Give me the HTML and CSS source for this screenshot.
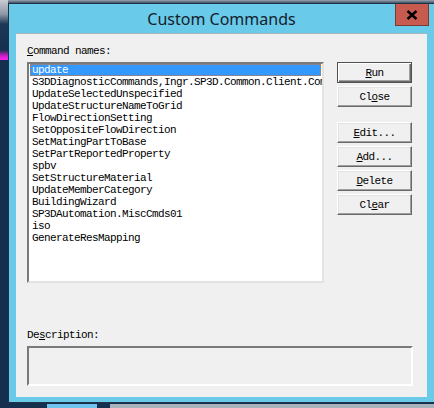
FILE: index.html
```html
<!DOCTYPE html>
<html lang="en">
<head>
  <meta charset="UTF-8">
  <title>Custom Commands</title>
  <link rel="stylesheet" href="styles.css">
</head>
<body>
  <div class="desktop">
    <span class="wallpaper-glow"></span>
    <div class="window">
      <div class="titlebar">
        <span class="title">Custom Commands</span>
        <button class="close-btn" aria-label="Close">
          <svg width="12" height="10" viewBox="0 0 12 10">
            <path d="M1.5 1 L10.5 9 M10.5 1 L1.5 9" stroke="#000" stroke-width="2.4" />
          </svg>
        </button>
      </div>

      <div class="client">
        <div class="label"><u>C</u>ommand names:</div>
        <div class="top-row">
          <ul class="listbox">
            <li class="selected">update</li>
            <li>S3DDiagnosticCommands,Ingr.SP3D.Common.Client.Com</li>
            <li>UpdateSelectedUnspecified</li>
            <li>UpdateStructureNameToGrid</li>
            <li>FlowDirectionSetting</li>
            <li>SetOppositeFlowDirection</li>
            <li>SetMatingPartToBase</li>
            <li>SetPartReportedProperty</li>
            <li>spbv</li>
            <li>SetStructureMaterial</li>
            <li>UpdateMemberCategory</li>
            <li>BuildingWizard</li>
            <li>SP3DAutomation.MiscCmds01</li>
            <li>iso</li>
            <li>GenerateResMapping</li>
          </ul>
          <div class="buttons">
            <button class="btn default"><u>R</u>un</button>
            <button class="btn">Cl<u>o</u>se</button>
            <button class="btn spaced"><u>E</u>dit...</button>
            <button class="btn"><u>A</u>dd...</button>
            <button class="btn"><u>D</u>elete</button>
            <button class="btn">Cl<u>e</u>ar</button>
          </div>
        </div>
        <div class="label desc-label">De<u>s</u>cription:</div>
        <div class="desc-box"></div>
      </div>
    </div>
    <div class="taskbar">
      <span class="task-active"></span>
      <span class="task-rest"></span>
    </div>
  </div>
</body>
</html>
```

FILE: styles.css
```css
html, body {
  margin: 0;
  padding: 0;
}
body {
  width: 434px;
  height: 408px;
  overflow: hidden;
  background: #15304f;
  font-family: 'Liberation Mono', 'DejaVu Sans Mono', monospace;
}
.desktop {
  position: relative;
  width: 434px;
  height: 408px;
  background:
    linear-gradient(180deg, #9aa3ad 0, #3d5168 3px, #15304f 6px, #15304f 100%);
}
/* bit of wallpaper peeking out at the top-left */
.wallpaper-glow {
  position: absolute;
  left: 0;
  top: 0;
  width: 8px;
  height: 60px;
  background: linear-gradient(180deg, #c9ccd2 0, #8d98a6 14px, #1d3856 24px, #15304f 50px, #d020c8 56px, #ff20f0 60px);
}
.window {
  position: absolute;
  left: 8px;
  top: 3px;
  width: 426px;
  height: 400px;
  box-sizing: border-box;
  border: 1px solid #1f3342;
  border-right: none;
  background: #69caea;
  display: flex;
  flex-direction: column;
}
.titlebar {
  height: 29px;
  position: relative;
  display: flex;
  align-items: center;
  justify-content: center;
}
.title {
  font-family: 'Noto Sans', 'Open Sans', sans-serif;
  font-size: 16px;
  color: #15212b;
  margin-top: 1px;
}
.close-btn {
  position: absolute;
  right: 5px;
  top: 0;
  width: 34px;
  height: 22px;
  padding: 0;
  border: 1px solid #7d3a33;
  border-top: none;
  background: #c75b50;
  display: flex;
  align-items: center;
  justify-content: center;
}
.client {
  margin-left: 7px;
  width: 411px;
  height: 364px;
  box-sizing: border-box;
  background: #f0f0f0;
  border-top: 1px solid #a9b4bb;
  padding: 11px 0 0 11px;
  font-size: 11px;
  letter-spacing: -0.6px;
  color: #000;
}
.label {
  height: 17px;
  line-height: 13px;
}
u {
  text-decoration-thickness: 1px;
  text-underline-offset: 1px;
}
.top-row {
  display: flex;
  gap: 13px;
}
.listbox {
  list-style: none;
  margin: 0;
  padding: 0 0 0 1px;
  width: 297px;
  height: 221px;
  box-sizing: border-box;
  background: #fff;
  border: 2px solid;
  border-color: #7a7a7a #e3e3e3 #e3e3e3 #7a7a7a;
  overflow: hidden;
  white-space: nowrap;
}
.listbox li {
  height: 12px;
  line-height: 13px;
  padding-left: 2px;
}
.listbox li.selected {
  background: #3399ff;
  color: #fff;
  outline: 1px dotted #e07020;
  outline-offset: -1px;
  margin-right: 1px;
}
.buttons {
  display: flex;
  flex-direction: column;
  gap: 3px;
}
.btn {
  width: 75px;
  height: 21px;
  padding: 1px 0 0;
  font-family: inherit;
  font-size: 11px;
  letter-spacing: -0.6px;
  color: #000;
  background: #f0f0f0;
  border: 1px solid;
  border-color: #ffffff #696969 #696969 #ffffff;
  box-shadow: inset -1px -1px 0 #a0a0a0, inset 1px 1px 0 #e3e3e3;
}
.btn.default {
  border: 1px solid #505050;
  box-shadow: inset 1px 1px 0 #ffffff, inset -1px -1px 0 #696969, inset -2px -2px 0 #a0a0a0;
}
.btn.spaced {
  margin-top: 12px;
}
.desc-label {
  margin-top: 46px;
  height: 17px;
}
.desc-box {
  width: 386px;
  height: 40px;
  box-sizing: border-box;
  border: 2px solid;
  border-color: #7a7a7a #ffffff #ffffff #7a7a7a;
  background: #f0f0f0;
}
.taskbar {
  position: absolute;
  left: 0;
  top: 404px;
  width: 434px;
  height: 4px;
  display: flex;
}
.task-active {
  margin-left: 47px;
  width: 50px;
  background: #6ec4ee;
}
.task-rest {
  margin-left: 13px;
  flex: 1;
  background: #a8b2bc;
}
```
